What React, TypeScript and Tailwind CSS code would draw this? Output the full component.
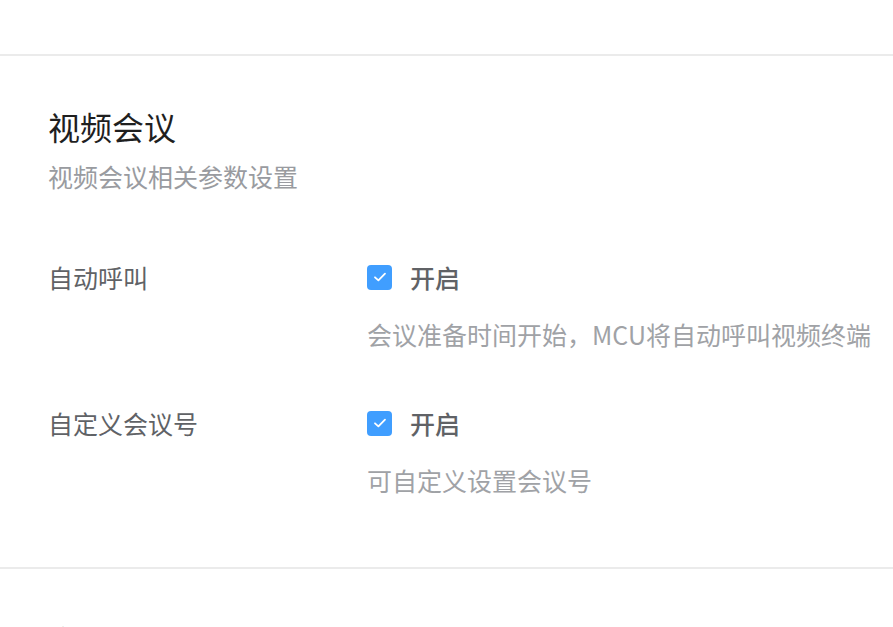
import React from "react";

function Check() {
  return (
    <span className="flex h-[25px] w-[25px] shrink-0 items-center justify-center rounded-[4px] bg-[#409eff]">
      <svg width="16" height="16" viewBox="0 0 16 16" fill="none">
        <path d="M3 8.3 L6.4 11.4 L13 4.6" stroke="#fff" strokeWidth="1.8" strokeLinecap="round" strokeLinejoin="round" />
      </svg>
    </span>
  );
}

function Row({ label, desc, first }: { label: string; desc: string; first?: boolean }) {
  return (
    <div className={first ? "mt-[65px] flex" : "mt-[53px] flex"}>
      <div className="w-[319px] shrink-0 text-[25px] leading-[36px] text-[#606266]">{label}</div>
      <div className="flex flex-col">
        <div className="flex h-[36px] items-center gap-[18px]">
          <Check />
          <span className="text-[25px] font-medium leading-[36px] text-[#606266]">开启</span>
        </div>
        <div className="mt-[21px] whitespace-nowrap text-[25px] leading-[36px] text-[#a0a2a6]">{desc}</div>
      </div>
    </div>
  );
}

export default function App() {
  return (
    <div
      className="h-[627px] w-[893px] overflow-hidden bg-white"
      style={{ fontFamily: '"Noto Sans CJK SC", "Noto Sans", sans-serif' }}
    >
      <div className="h-[54px]" />
      <div className="h-[2px] bg-[#ebebeb]" />
      <div className="px-[48px] pt-[48px]">
        <div className="text-[32px] leading-[44px] text-[#1f1f1f]">视频会议</div>
        <div className="mt-[10px] text-[25px] leading-[36px] text-[#999ba0]">视频会议相关参数设置</div>
        <Row first label="自动呼叫" desc="会议准备时间开始，MCU将自动呼叫视频终端" />
        <Row label="自定义会议号" desc="可自定义设置会议号" />
      </div>
      <div className="mt-[69px] h-[2px] bg-[#ebebeb]" />
      <div className="px-[48px] pt-[49px]">
        <div className="text-[32px] leading-[44px] text-[#1f1f1f]">直播设置</div>
      </div>
    </div>
  );
}
